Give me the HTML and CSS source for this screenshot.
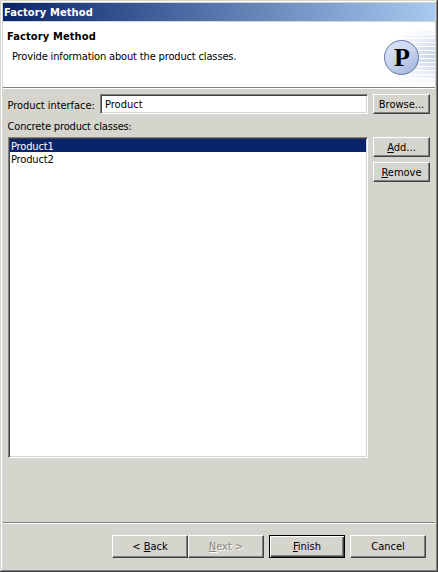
FILE: index.html
```
<!DOCTYPE html>
<html lang="en">
<head>
<meta charset="utf-8">
<title>Factory Method</title>
<link rel="stylesheet" href="styles.css">
</head>
<body>
<div class="window">
  <div class="titlebar"><span class="t-title">Factory Method</span></div>
  <header class="banner">
    <div class="banner-text">
      <h1 class="t-title">Factory Method</h1>
      <p class="t-desc">Provide information about the product classes.</p>
    </div>
    <svg class="logo" width="57" height="65" viewBox="378 22 57 65">
      <defs>
        <linearGradient id="fade" gradientUnits="userSpaceOnUse" x1="386" x2="435" y1="0" y2="0">
          <stop offset="0" stop-color="#fff"/><stop offset=".5" stop-color="#e6eaf7"/><stop offset="1" stop-color="#cbd4ec"/>
        </linearGradient>
        <linearGradient id="ball" x1=".15" y1="0" x2=".8" y2="1">
          <stop offset="0" stop-color="#dfe6f6"/><stop offset=".5" stop-color="#c8d3ed"/><stop offset="1" stop-color="#a3b4dc"/>
        </linearGradient>
      </defs>
      <g fill="url(#fade)">
        <rect x="406" y="31" width="29" height="3" opacity=".2"/>
        <rect x="402" y="35" width="33" height="3" opacity=".4"/>
        <rect x="396" y="39" width="39" height="3" opacity=".6"/>
        <rect x="392" y="43" width="43" height="3" opacity=".75"/>
        <rect x="390" y="47" width="45" height="3" opacity=".9"/>
        <rect x="390" y="51" width="45" height="3"/>
        <rect x="390" y="55" width="45" height="3"/>
        <rect x="390" y="59" width="45" height="3"/>
        <rect x="390" y="63" width="45" height="3" opacity=".85"/>
        <rect x="390" y="67" width="45" height="3" opacity=".7"/>
        <rect x="390" y="71" width="45" height="3" opacity=".55"/>
        <rect x="392" y="75" width="43" height="3" opacity=".4"/>
        <rect x="398" y="79" width="37" height="3" opacity=".25"/>
      </g>
      <circle cx="401.5" cy="57.5" r="17" fill="url(#ball)" stroke="#607ba8"/>
      <text x="394" y="66" class="logo-letter" textLength="16" lengthAdjust="spacingAndGlyphs">P</text>
    </svg>
  </header>
  <main class="content">
    <div class="row">
      <label class="t-interface">Product interface:</label>
      <div class="field sunken"><span class="t-product">Product</span></div>
      <div class="button small"><span class="t-browse">Browse...</span></div>
    </div>
    <div class="caption"><span class="t-concrete">Concrete product classes:</span></div>
    <div class="row">
      <div class="list sunken">
        <div class="item selected"><span class="t-item">Product1</span></div>
        <div class="item"><span class="t-item">Product2</span></div>
      </div>
      <div class="side">
        <div class="button small"><span class="t-add"><u>A</u>dd...</span></div>
        <div class="button small"><span class="t-remove"><u>R</u>emove</span></div>
      </div>
    </div>
  </main>
  <footer class="footer">
    <div class="button"><span class="t-back">&lt; <u>B</u>ack</span></div>
    <div class="button disabled"><span class="t-next"><u>N</u>ext &gt;</span></div>
    <div class="button default"><span class="t-finish"><u>F</u>inish</span></div>
    <div class="button cancel"><span class="t-cancel">Cancel</span></div>
  </footer>
</div>
</body>
</html>
```
FILE: styles.css
```
* { box-sizing: border-box; }
body {
  margin: 0;
  font: 11px/13px "DejaVu Sans Condensed", "DejaVu Sans", sans-serif;
  font-stretch: condensed;
  color: #000;
  background: #d6d5cd;
}
.window {
  width: 438px;
  height: 572px;
  display: flex;
  flex-direction: column;
  background: #d6d5cd;
  padding: 3px 3px 2px;
  box-shadow: inset -1px -1px #404040, inset 1px 1px #d6d5cd, inset -2px -2px #808080, inset 2px 2px #fff;
}
span, label, h1, p { white-space: nowrap; }
.titlebar {
  height: 18px;
  padding: 3px 0 0 1px;
  color: #fff;
  font-weight: bold;
  background: linear-gradient(90deg, #0a246a, #a6caf0);
}
.banner {
  height: 67px;
  margin-top: 1px;
  display: flex;
  justify-content: space-between;
  background: #fff;
  border-bottom: 1px solid #fff;
  box-shadow: inset 0 -1px #808080;
}
.banner-text { padding: 8px 0 0 4px; }
h1 { margin: 0; font-size: 11px; line-height: 13px; }
.t-title { letter-spacing: 0.12px; }
.t-desc { letter-spacing: -0.15px; }
.t-interface { letter-spacing: -0.05px; }
.t-concrete, .t-item { letter-spacing: -0.15px; }
.banner-text p { margin: 7px 0 0 5px; }
.logo { display: block; }
.logo-letter { font: bold 25px "Liberation Serif", serif; }
.content { padding: 5px 5px 0; }
.row { display: flex; gap: 5px; }
.row label { width: 87px; padding-top: 5px; text-indent: -0.5px; }
.sunken {
  background: #fff;
  border: 1px solid;
  border-color: #808080 #fff #fff #808080;
  box-shadow: inset 1px 1px #404040, inset -1px -1px #d6d5cd;
}
.field { width: 268px; height: 20px; padding: 3px 0 0 4px; }
.button {
  width: 76px;
  height: 23px;
  display: flex;
  justify-content: center;
  align-items: center;
  border: 1px solid;
  border-color: #fff #404040 #404040 #fff;
  box-shadow: inset -1px -1px #808080;
}
.small { width: 57px; height: 20px; }
.caption { height: 23px; padding-top: 6px; text-indent: -0.5px; }
.list { width: 360px; height: 321px; padding: 1px; }
.item { height: 13px; padding-left: 1px; line-height: 15px; }
.selected { background: #0a246a; color: #fff; }
.side { display: flex; flex-direction: column; gap: 5px; }
.footer {
  display: flex;
  height: 48px;
  margin-top: auto;
  padding: 12px 9px 0 109px;
  border-top: 1px solid #808080;
  box-shadow: inset 0 1px #fff;
}
.disabled { color: #858581; text-shadow: 1px 1px #fff; }
.default {
  margin: 0 5px;
  border-color: #000;
  box-shadow: inset 1px 1px #fff, inset -1px -1px #404040, inset -2px -2px #808080;
}
u { text-decoration: underline; text-decoration-thickness: 1px; text-underline-offset: 1px; }
```
